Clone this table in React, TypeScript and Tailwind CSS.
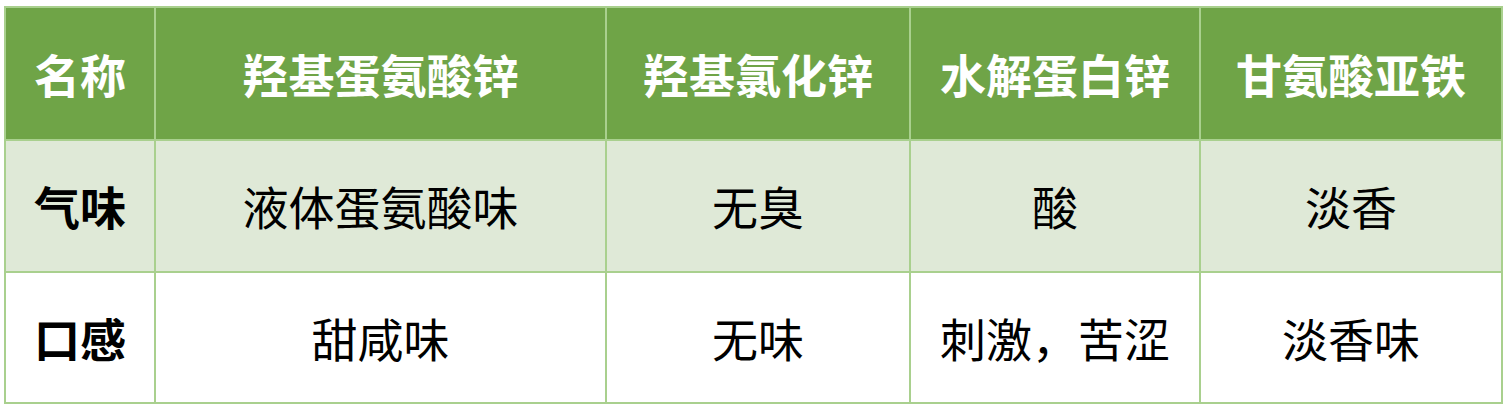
import React from "react";

const header = ["名称", "羟基蛋氨酸锌", "羟基氯化锌", "水解蛋白锌", "甘氨酸亚铁"];
const rows = [
  { bg: "bg-[#dfe9d7]", cells: ["气味", "液体蛋氨酸味", "无臭", "酸", "淡香"] },
  { bg: "bg-white", cells: ["口感", "甜咸味", "无味", "刺激，苦涩", "淡香味"] },
];

export default function App() {
  return (
    <div className="w-[1507px] h-[410px] bg-white pt-[6px] pl-[4px]" style={{ fontFamily: '"Noto Sans CJK SC", "Noto Sans", sans-serif' }}>
      <div className="inline-grid grid-cols-[148px_449px_302px_288px_300px] grid-rows-[131px_130px_129px] gap-[2px] p-[2px] bg-[#a9d08e]">
        {header.map((h) => (
          <div key={h} className="bg-[#6fa447] flex items-center justify-center text-white font-bold text-[46px] leading-none pb-[2px]">
            {h}
          </div>
        ))}
        {rows.map((r) =>
          r.cells.map((c, i) => (
            <div
              key={r.cells[0] + i}
              className={`${r.bg} flex items-center justify-center text-black text-[46px] leading-none pb-[2px] ${i === 0 ? "font-bold" : "font-normal"}`}
            >
              {c}
            </div>
          ))
        )}
      </div>
    </div>
  );
}
